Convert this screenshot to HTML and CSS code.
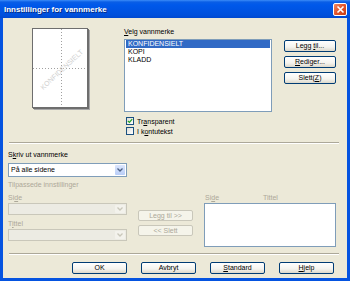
FILE: index.html
```html
<!DOCTYPE html>
<html lang="no">

<head>
  <meta charset="UTF-8">
  <title>Innstillinger for vannmerke</title>
  <link rel="stylesheet" href="styles.css">
</head>

<body>
  <div class="window">
    <div class="titlebar">
      <span class="title">Innstillinger for vannmerke</span>
      <span class="close">
        <svg width="9" height="9" viewBox="0 0 9 9">
          <path d="M1.5 1.5 L7.5 7.5 M7.5 1.5 L1.5 7.5" stroke="#fff" stroke-width="1.6" />
        </svg>
      </span>
    </div>

    <div class="client">
      <div class="top">
        <div class="preview">
          <svg width="54" height="78" viewBox="0 0 54 78">
            <line x1="28.5" y1="0" x2="28.5" y2="78" stroke="#a0a0a0" stroke-dasharray="1 2" />
            <line x1="0" y1="39.5" x2="54" y2="39.5" stroke="#a0a0a0" stroke-dasharray="1 2" />
            <text x="29" y="43" transform="rotate(-43 29 41)" text-anchor="middle" class="wm">KONFIDENSIELT</text>
          </svg>
        </div>

        <div class="pick">
          <div class="label"><u>V</u>elg vannmerke</div>
          <div class="list">
            <div class="item selected">KONFIDENSIELT</div>
            <div class="item">KOPI</div>
            <div class="item">KLADD</div>
          </div>
          <div class="check">
            <span class="box">
              <svg width="6" height="6" viewBox="0 0 6 6">
                <path d="M0.8 2.8 L2.4 4.4 L5.2 1.2" fill="none" stroke="#21a121" stroke-width="1.2" />
              </svg>
            </span>
            <span>Tr<u>a</u>nsparent</span>
          </div>
          <div class="check">
            <span class="box"></span>
            <span>I k<u>o</u>ntutekst</span>
          </div>
        </div>

        <div class="side-buttons">
          <div class="btn">Legg <u>t</u>il...</div>
          <div class="btn"><u>R</u>ediger...</div>
          <div class="btn">Slett(<u>Z</u>)</div>
        </div>
      </div>

      <div class="sep"></div>

      <div class="lower">
        <div class="col-left">
          <div class="label first">S<u>k</u>riv ut vannmerke</div>
          <div class="combo">
            <span class="value">På alle sidene</span>
            <span class="drop"><svg width="6" height="4" viewBox="0 0 6 4"><path d="M0.5 0.5 L3 3 L5.5 0.5" fill="none" stroke="#4d6185" stroke-width="1.3" /></svg></span>
          </div>
          <div class="label gray">Tilpassede innstillinger</div>
          <div class="label gray">Si<u>d</u>e</div>
          <div class="combo off">
            <span class="value"></span>
            <span class="drop"><svg width="6" height="4" viewBox="0 0 6 4"><path d="M0.5 0.5 L3 3 L5.5 0.5" fill="none" stroke="#c9c7ba" stroke-width="1.3" /></svg></span>
          </div>
          <div class="label gray second">T<u>i</u>ttel</div>
          <div class="combo off">
            <span class="value"></span>
            <span class="drop"><svg width="6" height="4" viewBox="0 0 6 4"><path d="M0.5 0.5 L3 3 L5.5 0.5" fill="none" stroke="#c9c7ba" stroke-width="1.3" /></svg></span>
          </div>
        </div>

        <div class="col-mid">
          <div class="btn off">Legg til &gt;&gt;</div>
          <div class="btn off">&lt;&lt; Slett</div>
        </div>

        <div class="col-right">
          <div class="heads">
            <span class="head-side">Si<u>d</u>e</span>
            <span>Tittel</span>
          </div>
          <div class="table-box"></div>
        </div>
      </div>

      <div class="sep"></div>

      <div class="actions">
        <div class="btn">OK</div>
        <div class="btn">Avbryt</div>
        <div class="btn"><u>S</u>tandard</div>
        <div class="btn"><u>H</u>jelp</div>
      </div>
    </div>
  </div>
</body>

</html>
```

FILE: styles.css
```css
* {
  margin: 0px;
  padding: 0px;
  box-sizing: border-box;
}

body {
  width: 350px;
  height: 281px;
  overflow: hidden;
  font-family: 'Liberation Sans', Arial, sans-serif;
  font-size: 7px;
  color: #000;
}

u {
  text-decoration: underline;
  text-underline-offset: 1px;
}

.window {
  width: 350px;
  height: 281px;
  background: #0553e0;
  padding: 0 3px 3px 3px;
  display: flex;
  flex-direction: column;
}

.titlebar {
  height: 18px;
  margin: 0 -3px;
  padding: 0 3px 0 4px;
  display: flex;
  align-items: center;
  justify-content: space-between;
  background: linear-gradient(180deg, #3c8cf8 0px, #0a5ee6 2px, #0058ea 5px, #0054e3 10px, #0050dc 15px, #0049d0 18px);
}

.title {
  color: #fff;
  font-weight: bold;
  font-size: 8px;
  text-shadow: 1px 1px 0 #0a2c80;
}

.close {
  width: 14px;
  height: 13px;
  border: 1px solid #fff;
  border-radius: 2px;
  background: linear-gradient(135deg, #f08a66, #e2542b 50%, #c73d12);
  display: flex;
  align-items: center;
  justify-content: center;
  margin-top: 1px;
}

.client {
  flex: 1;
  background: #ece9d8;
  display: flex;
  flex-direction: column;
}

.top {
  height: 124px;
  display: flex;
}

.preview {
  margin: 10px 0 0 29px;
  width: 56px;
  height: 80px;
  background: #fff;
  border: 1px solid #6e6e6e;
  box-shadow: 1px 1px 0 #6e6e6e, 2px 2px 0 #a8a8a8;
}

.preview svg {
  display: block;
}

.wm {
  font-family: 'Liberation Sans', Arial, sans-serif;
  font-size: 7px;
  fill: #cfcfcf;
}

.pick {
  margin: 9px 0 0 36px;
  width: 148px;
  display: flex;
  flex-direction: column;
}

.label {
  height: 10px;
  line-height: 10px;
  white-space: nowrap;
}

.list {
  margin-top: 2px;
  height: 73px;
  background: #fff;
  border: 1px solid #7f9db9;
  padding: 0 1px;
}

.item {
  height: 8px;
  line-height: 8px;
  padding-left: 2px;
}

.item.selected {
  background: #316ac5;
  color: #fff;
}

.check {
  margin-top: 4px;
  height: 10px;
  display: flex;
  align-items: center;
  gap: 3px;
  margin-left: 2px;
}

.check + .check {
  margin-top: 0px;
}

.box {
  width: 8px;
  height: 8px;
  background: linear-gradient(135deg, #dcdcd7, #fff);
  border: 1px solid #1c5180;
  display: flex;
  align-items: center;
  justify-content: center;
}

.side-buttons {
  margin: 22px 0 0 12px;
  width: 52px;
  display: flex;
  flex-direction: column;
  gap: 4px;
}

.btn {
  height: 12px;
  line-height: 10px;
  text-align: center;
  border: 1px solid #003c74;
  border-radius: 2px;
  background: linear-gradient(180deg, #ffffff, #f4f3ee 60%, #dcd8cb);
  white-space: nowrap;
}

.btn.off {
  border-color: #c9c7ba;
  background: #f5f4ea;
  color: #aca899;
}

.sep {
  height: 2px;
  margin: 0 8px 0 6px;
  border-top: 1px solid #aca899;
  border-bottom: 1px solid #fff;
}

.lower {
  height: 109px;
  display: grid;
  grid-template-columns: 119px 55px 132px;
  column-gap: 11px;
  padding-left: 5px;
}

.col-left {
  display: flex;
  flex-direction: column;
  gap: 3px;
}

.col-left .first {
  margin-top: 6px;
}

.col-left .second {
  margin-top: 1px;
}

.gray {
  color: #aca899;
}

.combo {
  height: 14px;
  background: #fff;
  border: 1px solid #7f9db9;
  display: flex;
  align-items: stretch;
  margin-top: -3px;
}

.col-left .first + .combo {
  margin-top: 0px;
}

.combo .value {
  flex: 1;
  line-height: 12px;
  padding-left: 2px;
}

.combo .drop {
  width: 10px;
  margin: 1px;
  border-radius: 1px;
  background: linear-gradient(180deg, #dce6fd, #b9cdf7);
  display: flex;
  align-items: center;
  justify-content: center;
}

.combo.off {
  height: 12px;
  background: #ecebe3;
  border-color: #c9c7ba;
}

.combo.off .drop {
  background: #f3f2ec;
}

.col-mid {
  padding-top: 66px;
  display: flex;
  flex-direction: column;
  gap: 4px;
}

.col-mid .btn {
  height: 11px;
  line-height: 9px;
}

.col-right {
  padding-top: 49px;
  display: flex;
  flex-direction: column;
}

.heads {
  height: 10px;
  line-height: 10px;
  color: #aca899;
  display: flex;
  padding-left: 1px;
}

.head-side {
  width: 58px;
}

.table-box {
  height: 44px;
  background: #fff;
  border: 1px solid #7f9db9;
}

.actions {
  margin: 7px 0 0 69px;
  display: flex;
  gap: 14px;
}

.actions .btn {
  width: 55px;
}
```
